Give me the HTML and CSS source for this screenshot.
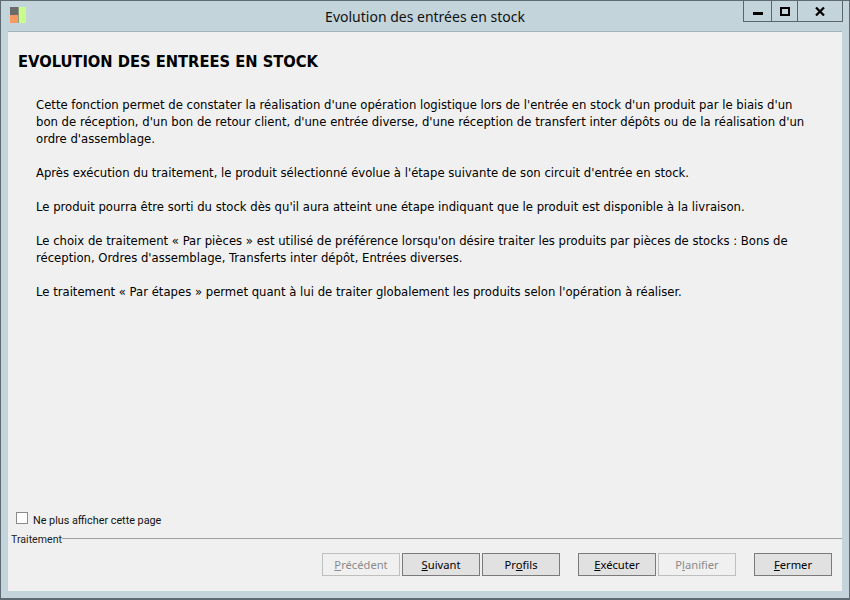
FILE: index.html
```html
<!DOCTYPE html>
<html lang="fr">
<head>
<meta charset="utf-8">
<title>Evolution des entrées en stock</title>
<link rel="stylesheet" href="styles.css">
</head>
<body>
<div class="window">
  <header class="titlebar">
    <svg class="app-icon" width="17" height="17" viewBox="0 0 17 17">
      <rect x="0" y="0" width="8" height="8" fill="#6b6b6b"/>
      <rect x="0" y="8" width="8" height="8" fill="#f79a62"/>
      <rect x="8" y="0" width="1" height="16" fill="#8c9a80"/>
      <rect x="9" y="0" width="7" height="16" fill="#c9fb8e"/>
    </svg>
    <div class="title">Evolution des entrées en stock</div>
    <div class="controls">
      <div class="ctl ctl-min"><svg width="10" height="3" viewBox="0 0 10 3"><rect width="10" height="3" fill="#000"/></svg></div>
      <div class="ctl ctl-max"><svg width="10" height="9" viewBox="0 0 10 9"><path d="M1 1h8v7h-8z" fill="none" stroke="#000" stroke-width="2"/></svg></div>
      <div class="ctl ctl-close"><svg width="10" height="9" viewBox="0 0 10 9"><path d="M1 0.5L9 8.5M9 0.5L1 8.5" fill="none" stroke="#000" stroke-width="2.2"/></svg></div>
    </div>
  </header>
  <main class="client">
    <h1 class="heading">EVOLUTION DES ENTREES EN STOCK</h1>
    <div class="body-text">
      <p>Cette fonction permet de constater la réalisation d'une opération logistique lors de l'entrée en stock d'un produit par le biais d'un<br>bon de réception, d'un bon de retour client, d'une entrée diverse, d'une réception de transfert inter dépôts ou de la réalisation d'un<br>ordre d'assemblage.</p>
      <p>Après exécution du traitement, le produit sélectionné évolue à l'étape suivante de son circuit d'entrée en stock.</p>
      <p>Le produit pourra être sorti du stock dès qu'il aura atteint une étape indiquant que le produit est disponible à la livraison.</p>
      <p>Le choix de traitement « Par pièces » est utilisé de préférence lorsqu'on désire traiter les produits par pièces de stocks : Bons de<br>réception, Ordres d'assemblage, Transferts inter dépôt, Entrées diverses.</p>
      <p>Le traitement « Par étapes » permet quant à lui de traiter globalement les produits selon l'opération à réaliser.</p>
    </div>
    <label class="check"><span class="box"></span>Ne plus afficher cette page</label>
    <div class="group"><span class="legend">Traitement</span><span class="rule"></span></div>
    <div class="buttons">
      <div class="btn-set">
        <div class="btn off"><u>P</u>récédent</div>
        <div class="btn"><u>S</u>uivant</div>
        <div class="btn">Pr<u>o</u>fils</div>
      </div>
      <div class="btn-set">
        <div class="btn"><u>E</u>xécuter</div>
        <div class="btn off">P<u>l</u>anifier</div>
      </div>
      <div class="btn"><u>F</u>ermer</div>
    </div>
  </main>
</div>
</body>
</html>
```
FILE: styles.css
```css
* { box-sizing: border-box; }
html, body { margin: 0; height: 100%; }
body { width: 850px; height: 600px; overflow: hidden; font-family: "Noto Sans", "DejaVu Sans", sans-serif; color: #000; }
.window { width: 850px; height: 600px; display: flex; flex-direction: column; background: #c3d4db; border: 1px solid #5f6b72; border-bottom-width: 2px; padding: 0 7px 7px; }
.titlebar { height: 30px; flex: none; display: flex; position: relative; align-items: flex-start; }
.app-icon { margin: 6px 0 0 2px; }
.title { position: absolute; left: 0; right: 0; top: 6px; text-align: center; font-size: 14px; line-height: 19px; color: #111; }
.controls { margin-left: auto; margin-right: -1px; display: flex; height: 21px; border: 1px solid #5a666c; border-top: 0; }
.ctl { display: flex; align-items: center; justify-content: center; }
.ctl svg { display: block; }
.ctl-min { width: 28px; border-right: 1px solid #5a666c; padding-top: 5px; }
.ctl-max { width: 26px; border-right: 1px solid #5a666c; }
.ctl-close { width: 44px; }
.client { flex: 1; display: flex; flex-direction: column; background: #f0f0f0; border-top: 1px solid #a6b4ba; min-height: 0; }
.heading { margin: 0; padding: 19px 0 0 10px; font-family: "DejaVu Sans", sans-serif; font-stretch: condensed; font-size: 16.35px; line-height: 21px; font-weight: 700; }
.body-text { padding: 24px 28px 0; font-family: "DejaVu Sans", sans-serif; font-stretch: condensed; font-size: 12.96px; line-height: 17px; flex: 1; }
.body-text p { margin: 0 0 17px; white-space: nowrap; }
.check { display: flex; align-items: center; height: 14px; padding-left: 8px; font-family: Roboto, sans-serif; font-size: 10.8px; color: #111; margin-bottom: 5px; }
.box { width: 12px; height: 12px; background: #fff; border: 1px solid #8a8a8a; margin: 0 5px 4px 0; }
.group { display: flex; align-items: center; height: 13px; padding-left: 3px; font-family: Roboto, sans-serif; font-size: 10.6px; color: #222; }
.legend { padding-top: 2px; }
.rule { flex: 1; height: 1px; background: #a0a0a0; }
.buttons { display: flex; justify-content: flex-end; gap: 18px; padding: 8px 10px 15px 0; }
.btn-set { display: flex; gap: 2px; }
.btn { width: 78px; height: 23px; display: flex; align-items: center; justify-content: center; font-size: 11.2px; background: #e1e1e1; border: 1px solid #7a7a7a; }
.btn.off { background: #f0f0f0; border-color: #bfbfbf; color: #8a8a8a; }
```
